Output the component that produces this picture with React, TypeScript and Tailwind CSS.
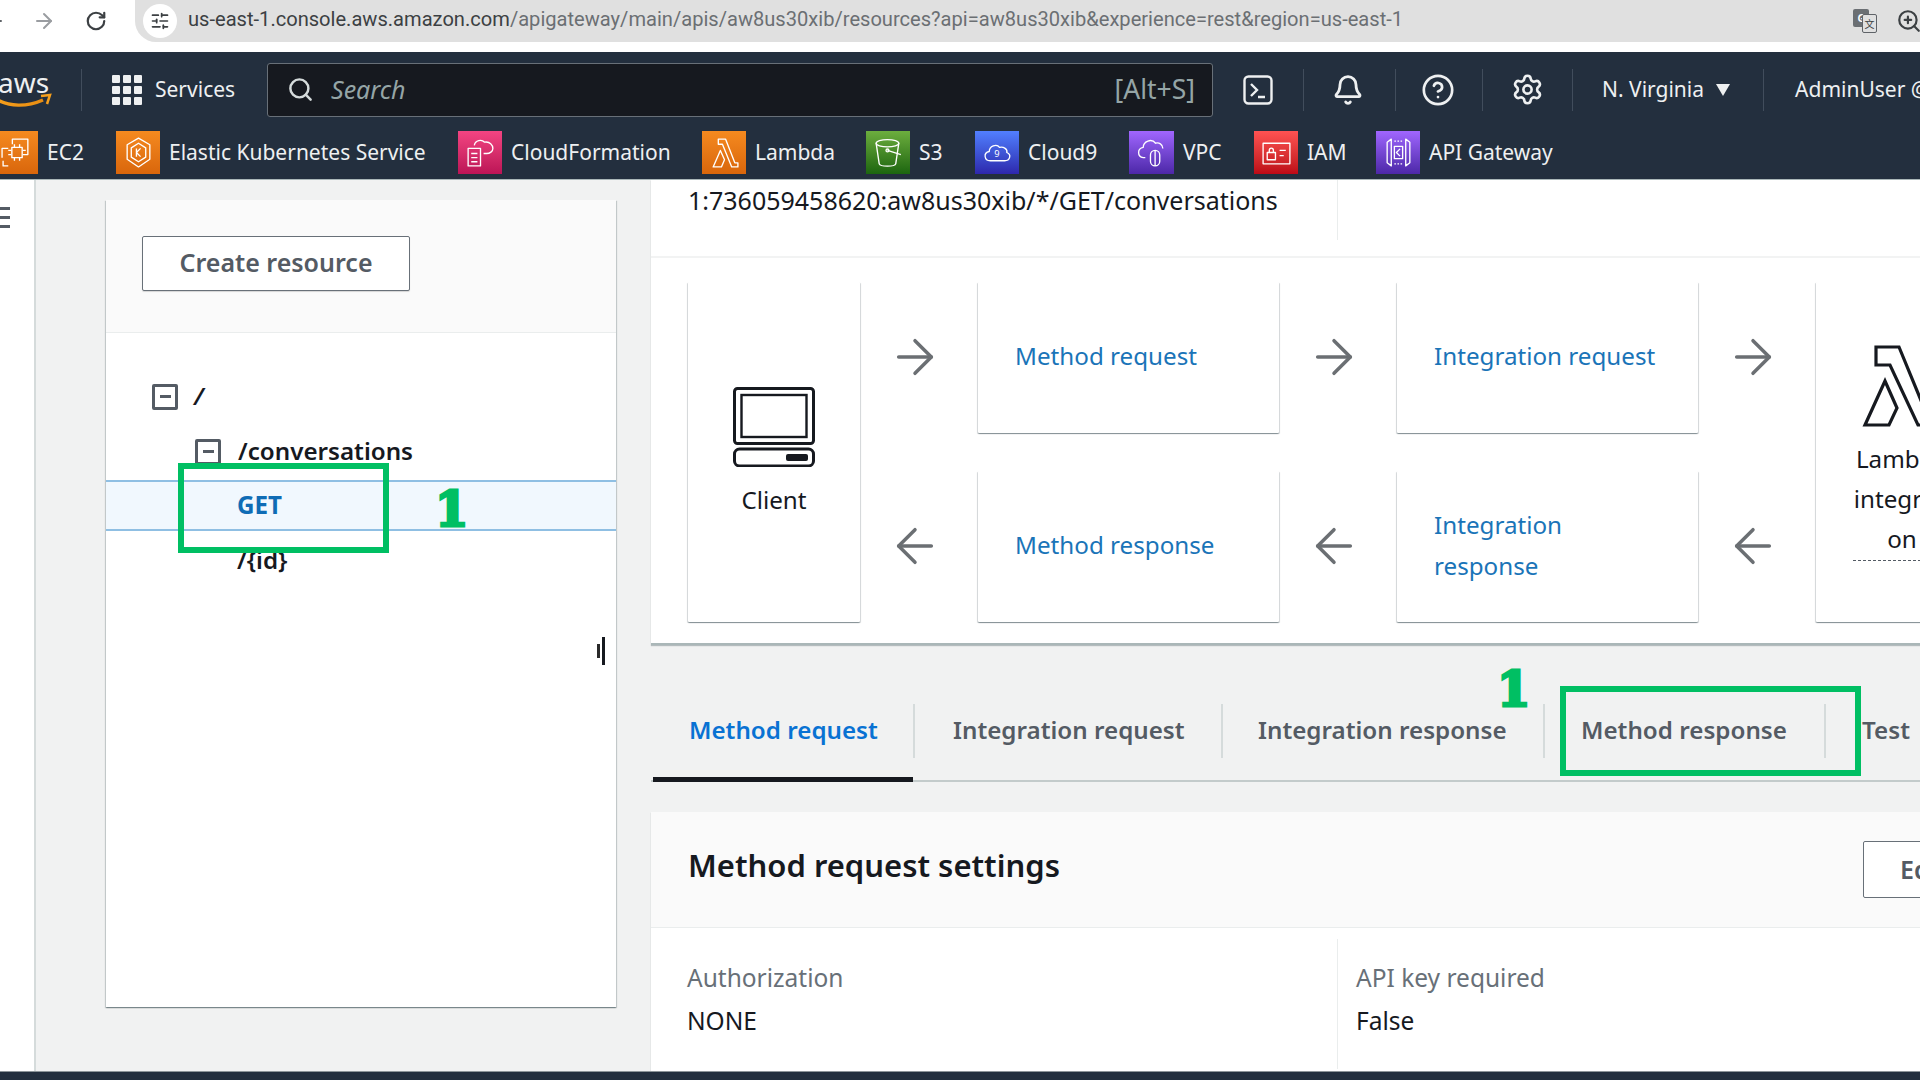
import { useId } from "react";
import { ArrowLeft, ArrowRight, Bell, CircleHelp, RotateCw, Search, Settings, SlidersHorizontal, ZoomIn } from "lucide-react";

const font = "font-['Noto_Sans',sans-serif]";

function Arrow({ dir }: { dir: "right" | "left" }) {
  const Icon = dir === "right" ? ArrowRight : ArrowLeft;
  return <Icon className="h-[56px] w-[56px] shrink-0 text-[#6b6f73]" strokeWidth={1.5} />;
}

function Card({ children, className }: { children: React.ReactNode; className?: string }) {
  return (
    <div className={`flex flex-col rounded-[1px] bg-white shadow-[0_1px_1px_0_rgba(0,28,36,0.3),1px_1px_1px_0_rgba(0,28,36,0.15),-1px_1px_1px_0_rgba(0,28,36,0.15)] ${className ?? ""}`}>
      {children}
    </div>
  );
}

function LinkCard({ lines }: { lines: string[] }) {
  return (
    <Card className="h-[151px] w-[301px] justify-center pb-[4px] pl-[37px] text-[24.2px] leading-[41px] text-[#1a74b8]">
      {lines.map((l) => (
        <span key={l}>{l}</span>
      ))}
    </Card>
  );
}

function Tile({ from, to, w = "w-[44px]", className, children }: { from: string; to: string; w?: string; className?: string; children: React.ReactNode }) {
  return (
    <div className={`flex h-[43px] shrink-0 items-center justify-center ${w} ${from} ${to} bg-linear-to-t ${className ?? ""}`}>
      <svg viewBox="0 0 32 32" className="h-[33px] w-[33px]" fill="none" stroke="#fff" strokeWidth="1.3" strokeLinejoin="round">
        {children}
      </svg>
    </div>
  );
}

function ServiceLink({ icon, label, width }: { icon: React.ReactNode; label: string; width: string }) {
  return (
    <div className={`flex shrink-0 items-center gap-[9px] ${width}`}>
      {icon}
      <span className="text-[21px] whitespace-nowrap text-[#eef0f1]">{label}</span>
    </div>
  );
}

function TabItem({ label, className }: { label: string; className: string }) {
  return (
    <div className={`flex h-[52px] shrink-0 items-center text-[24.2px] font-semibold ${className}`}>{label}</div>
  );
}

function GreenOne({ className }: { className?: string }) {
  return (
    <span className={`absolute font-['DejaVu_Serif',serif] text-[48px] leading-none font-bold text-[#00bf63] [-webkit-text-stroke:3px_#00bf63] ${className ?? ""}`}>1</span>
  );
}

function AwsLogo() {
  const id = useId();
  return (
    <svg viewBox="0 0 52 44" className="h-[44px] w-[52px] shrink-0 overflow-hidden" aria-hidden="true">
      <defs>
        <linearGradient id={id} x1="0" x2="1">
          <stop offset="0" stopColor="#f7a01c" />
          <stop offset="1" stopColor="#e88d12" />
        </linearGradient>
      </defs>
      <text x="-2" y="25" fill="#eef0f1" fontSize="28" fontFamily="Noto Sans, sans-serif">aws</text>
      <path d="M-4 31c13 8 31 8 47 1" fill="none" stroke={`url(#${id})`} strokeWidth="3.4" />
      <path d="M41 28l9-1-3 9" fill="none" stroke="#f7a01c" strokeWidth="2.5" />
    </svg>
  );
}

function NavDivider({ className }: { className: string }) {
  return <div className={`h-[42px] w-px shrink-0 bg-[#414d5c] ${className}`} />;
}

export default function App() {
  return (
    <div className={`${font} flex h-[1080px] w-[1920px] flex-col overflow-hidden bg-[#f1f2f2] text-[#16191f]`}>
      {/* browser chrome */}
      <div className="flex h-[52px] shrink-0 bg-white">
        <div className="flex h-[42px] w-full items-center">
          <ArrowLeft className="ml-[-18px] h-[24px] w-[24px] shrink-0 text-[#5f6368]" />
          <ArrowRight className="ml-[26px] h-[24px] w-[24px] shrink-0 text-[#9a9da1]" />
          <RotateCw className="ml-[29px] h-[22px] w-[22px] shrink-0 text-[#3c4043]" strokeWidth={2.4} />
          <div className="ml-[28px] flex h-[42px] flex-1 items-center rounded-bl-[21px] bg-[#e0e0e0]">
            <div className="ml-[8px] flex h-[34px] w-[34px] shrink-0 items-center justify-center rounded-full bg-white">
              <SlidersHorizontal className="h-[20px] w-[20px] text-[#3c4043]" />
            </div>
            <span className="ml-[11px] pb-[4px] font-['Roboto',sans-serif] text-[20.1px] whitespace-nowrap text-[#3c4043]">
              us-east-1.console.aws.amazon.com<span className="text-[#6b6f73]">/apigateway/main/apis/aw8us30xib/resources?api=aw8us30xib&amp;experience=rest&amp;region=us-east-1</span>
            </span>
            <div className="ml-auto flex items-center gap-[19px]">
              <div className="relative h-[24px] w-[24px]">
                <div className="absolute top-0 left-0 flex h-[18px] w-[16px] items-center justify-center rounded-[2px] bg-[#6b6f73] text-[10px] font-bold text-white">G</div>
                <div className="absolute top-[5px] left-[9px] flex h-[19px] w-[15px] items-center justify-center rounded-[2px] border border-[#5f6368] bg-[#e0e0e0] font-['Noto_Sans_CJK_SC',sans-serif] text-[10px] text-[#3c4043]">文</div>
              </div>
              <ZoomIn className="mr-[-2px] h-[26px] w-[26px] text-[#3c4043]" />
            </div>
          </div>
        </div>
      </div>

      {/* aws top nav */}
      <div className="h-[128px] shrink-0 border-b border-[#aab7b8] bg-[#232f3e] text-[#eef0f1]">
        <div className="flex h-[64px] items-center pt-[11px]">
          <div className="flex w-[81px] shrink-0 items-center">
            <AwsLogo />
          </div>
          <NavDivider className="" />
          <svg viewBox="0 0 30 30" className="ml-[30px] h-[30px] w-[30px] shrink-0 fill-[#eef0f1]">
            {[0, 11, 22].map((y) =>
              [0, 11, 22].map((x) => <rect key={`${x}-${y}`} x={x} y={y} width="8" height="8" rx="1" />),
            )}
          </svg>
          <span className="ml-[13px] w-[112px] shrink-0 text-[21px]">Services</span>
          <div className="flex h-[54px] w-[946px] shrink-0 items-center rounded-[3px] border border-[#687078] bg-[#16191f] pr-[17px] pl-[19px]">
            <Search className="h-[27px] w-[27px] text-[#d5dbdb]" strokeWidth={2.2} />
            <span className="ml-[17px] text-[25px] text-[#95a5a6] italic">Search</span>
            <span className="ml-auto text-[26.5px] text-[#95a5a6]">[Alt+S]</span>
          </div>
          <svg viewBox="0 0 30 30" className="ml-[30px] h-[30px] w-[30px] shrink-0" fill="none" stroke="#eef0f1" strokeWidth="2.4">
            <rect x="1.5" y="1.5" width="27" height="27" rx="4" />
            <path d="M8 9l6 6-6 6M15 22h7" />
          </svg>
          <NavDivider className="ml-[30px]" />
          <Bell className="ml-[28px] h-[32px] w-[32px] shrink-0" strokeWidth={2.1} />
          <NavDivider className="ml-[31px]" />
          <CircleHelp className="ml-[25px] h-[34px] w-[34px] shrink-0" strokeWidth={1.9} />
          <NavDivider className="ml-[27px]" />
          <Settings className="ml-[28px] h-[33px] w-[33px] shrink-0" strokeWidth={1.9} />
          <NavDivider className="ml-[28px]" />
          <span className="ml-[29px] shrink-0 text-[21px] whitespace-nowrap">N. Virginia</span>
          <svg viewBox="0 0 14 12" className="ml-[12px] h-[12px] w-[14px] shrink-0 fill-[#eef0f1]">
            <path d="M0 0h14L7 12z" />
          </svg>
          <NavDivider className="ml-[33px]" />
          <span className="ml-[31px] shrink-0 text-[21px] whitespace-nowrap">AdminUser @ 7360-5945-8620</span>
        </div>
        <div className="flex h-[63px] items-center pt-[10px]">
          <ServiceLink
            width="w-[116px]"
            label="EC2"
            icon={
              <Tile from="from-[#d9660b]" to="to-[#f58a1f]" className="ml-[-6px]">
                <rect x="11.5" y="11" width="10" height="10" />
                <path d="M2 21v-9h6M8 29H3v-5M12 8V3h15v15h-4M14 11V8M19 11V8M14 24v-3M19 24v-3M8 14h3M8 18h3M22 14h3M22 18h3" />
              </Tile>
            }
          />
          <ServiceLink
            width="w-[342px]"
            label="Elastic Kubernetes Service"
            icon={
              <Tile from="from-[#d9660b]" to="to-[#f58a1f]">
                <path d="M16 2l11 6.5v14L16 30 5 22.5v-14z" />
                <path d="M16 7l7 4.5v9L16 25l-7-4.5v-9z" />
                <path d="M14 12v8M14 16l4-4M14 16l4 4" />
              </Tile>
            }
          />
          <ServiceLink
            width="w-[244px]"
            label="CloudFormation"
            icon={
              <Tile from="from-[#bc1356]" to="to-[#f34482]">
                <rect x="4" y="12" width="12" height="17" />
                <path d="M7 17h6M7 21h6M7 25h6" />
                <path d="M10 9c1-5 7-6 10-3 5-1 8 3 8 6 0 3-3 5-6 5h-3" />
              </Tile>
            }
          />
          <ServiceLink
            width="w-[164px]"
            label="Lambda"
            icon={
              <Tile from="from-[#d9660b]" to="to-[#f58a1f]">
                <path d="M10 3h7l9 23h3v4h-6L14 8h-4z" />
                <path d="M12 14l4 9-3 7H5z" />
              </Tile>
            }
          />
          <ServiceLink
            width="w-[109px]"
            label="S3"
            icon={
              <Tile from="from-[#1b660f]" to="to-[#6cae3e]">
                <ellipse cx="15" cy="7" rx="11" ry="3.5" />
                <path d="M4 7l3 20c1 3 15 3 16 0l3-20" />
                <path d="M15 14l13 4" />
                <circle cx="15" cy="14" r="1.4" />
              </Tile>
            }
          />
          <ServiceLink
            width="w-[154px]"
            label="Cloud9"
            icon={
              <Tile from="from-[#2e27ad]" to="to-[#527fff]">
                <path d="M9 24c-6 0-7-8-1-9 0-5 7-8 10-4 4-1 8 2 7 5 5 2 3 8-2 8z" />
                <text x="15.5" y="20" fill="#fff" stroke="none" fontSize="9" textAnchor="middle">9</text>
              </Tile>
            }
          />
          <ServiceLink
            width="w-[125px]"
            label="VPC"
            icon={
              <Tile from="from-[#4d27a8]" to="to-[#a166ff]" w="w-[45px]">
                <path d="M10 21H8c-6-1-6-9 0-10 0-6 8-9 12-4 3-1 7 1 7 5" />
                <rect x="15" y="14" width="9" height="15" rx="4.5" />
                <path d="M19.5 14v15" />
              </Tile>
            }
          />
          <ServiceLink
            width="w-[122px]"
            label="IAM"
            icon={
              <Tile from="from-[#bd0816]" to="to-[#ff5252]">
                <rect x="3" y="7" width="26" height="20" />
                <rect x="7" y="16" width="8" height="7" />
                <path d="M9 16v-2c0-3 4-3 4 0v2M19 14h6M19 19h4" />
              </Tile>
            }
          />
          <ServiceLink
            width="w-[200px]"
            label="API Gateway"
            icon={
              <Tile from="from-[#4d27a8]" to="to-[#a166ff]">
                <path d="M5 6l4-3v26l-4-3zM27 6l-4-3v26l4-3z" />
                <path d="M12 5h8M12 27h8" strokeDasharray="1.5 1.5" />
                <rect x="12" y="10" width="8" height="12" />
                <path d="M17.5 12.5L14 16l3.5 3.5" />
              </Tile>
            }
          />
        </div>
      </div>

      <div className="flex min-h-0 flex-1">
        {/* side rail */}
        <div className="flex w-[36px] shrink-0 flex-col border-r-2 border-[#d5dbdb] bg-white pt-[27px]">
          <div className="flex w-[10px] flex-col gap-[6px]">
            <div className="h-[3px] bg-[#545b64]" />
            <div className="h-[3px] bg-[#545b64]" />
            <div className="h-[3px] bg-[#545b64]" />
          </div>
        </div>

        {/* resources panel */}
        <div className="relative mt-[20px] ml-[70px] flex h-[807px] w-[510px] shrink-0 flex-col bg-white shadow-[0_1px_1px_0_rgba(0,28,36,0.3),1px_1px_1px_0_rgba(0,28,36,0.15),-1px_1px_1px_0_rgba(0,28,36,0.15)]">
          <div className="h-[133px] shrink-0 border-b border-[#eaeded] bg-[#fafafa] pt-[36px] pl-[36px]">
            <div className="flex h-[55px] w-[268px] items-center justify-center rounded-[2px] border border-[#687078] bg-white pb-[2px] text-[25px] font-semibold text-[#545b64] shadow-[0_1px_1px_rgba(0,0,0,0.15)]">
              Create resource
            </div>
          </div>
          <div className="pt-[50px] text-[24.2px] font-semibold">
            <div className="flex h-[27px] items-center pl-[46px]">
              <TreeBox />
              <span className="ml-[16px] italic">/</span>
            </div>
            <div className="mt-[28px] flex h-[27px] items-center pl-[89px]">
              <TreeBox />
              <span className="ml-[17px]">/conversations</span>
            </div>
            <div className="mt-[15px] flex h-[51px] items-center border-y-2 border-[#8fbfe3] bg-[#f1f8fe] pl-[131px] font-bold text-[#0f6cb5]">
              GET
            </div>
            <div className="flex h-[59px] items-center pl-[131px]">{"/{id}"}</div>
          </div>
          <div className="absolute top-[437px] left-[491px] flex items-center gap-[2px]">
            <div className="h-[14px] w-[3px] bg-[#2a2a2a]" />
            <div className="h-[28px] w-[3px] bg-[#16191f]" />
          </div>
          <div className="absolute top-[263px] left-[72px] h-[90px] w-[211px] border-[6px] border-[#00bf63]" />
          <GreenOne className="top-[285px] left-[329px]" />
        </div>

        {/* method detail */}
        <div className="ml-[35px] flex w-[1400px] shrink-0 flex-col">
          <div className="h-[465px] shrink-0 border-b-2 border-[#aab7b8] bg-white shadow-[0_1px_1px_rgba(0,28,36,0.25)]">
            <div className="flex h-[78px] border-b-2 border-[#f2f3f3]">
              <div className="flex w-[686px] pt-[3px] pl-[37px] text-[25px] leading-[34px] whitespace-nowrap">
                1:736059458620:aw8us30xib/*/GET/conversations
              </div>
              <div className="h-[60px] w-px bg-[#eaeded]" />
            </div>
            <div className="flex pt-[24px] pl-[37px] text-[24.2px]">
              <Card className="h-[340px] w-[172px] shrink-0 items-center pt-[105px]">
                <ClientIcon />
                <span className="mt-[16px] leading-[34px]">Client</span>
              </Card>
              <Column>
                <Arrow dir="right" />
                <Arrow dir="left" />
              </Column>
              <div className="flex shrink-0 flex-col gap-[38px]">
                <LinkCard lines={["Method request"]} />
                <LinkCard lines={["Method response"]} />
              </div>
              <Column>
                <Arrow dir="right" />
                <Arrow dir="left" />
              </Column>
              <div className="flex shrink-0 flex-col gap-[38px]">
                <LinkCard lines={["Integration request"]} />
                <LinkCard lines={["Integration", "response"]} />
              </div>
              <Column>
                <Arrow dir="right" />
                <Arrow dir="left" />
              </Column>
              <Card className="h-[340px] w-[172px] shrink-0 items-center pt-[63px] text-center leading-[40px]">
                <LambdaIcon />
                <span className="mt-[12px] w-[98px] border-b border-dashed border-[#545b64] pb-[1px] whitespace-nowrap">
                  Lambda
                  <br />
                  integrati
                  <br />
                  on
                </span>
              </Card>
            </div>
          </div>

          {/* tabs */}
          <div className="relative mt-[59px] flex h-[78px] shrink-0 items-start border-b-2 border-[#c3cbcb]">
            <div className="ml-[2px] h-[78px] w-[260px] shrink-0 border-b-[5px] border-[#16191f] pl-[36px]">
              <TabItem label="Method request" className="text-[#0972d3]" />
            </div>
            <TabItem label="Integration request" className="h-[54px] w-[308px] border-l-2 border-[#d5dbdb] pb-[2px] pl-[38px] text-[#545b64]" />
            <TabItem label="Integration response" className="h-[54px] w-[322px] border-l-2 border-[#d5dbdb] pb-[2px] pl-[35px] text-[#545b64]" />
            <TabItem label="Method response" className="h-[54px] w-[281px] border-l-2 border-[#d5dbdb] pb-[2px] pl-[36px] text-[#545b64]" />
            <TabItem label="Test" className="h-[54px] border-l-2 border-[#d5dbdb] pb-[2px] pl-[36px] text-[#545b64]" />
            <div className="absolute top-[-18px] left-[909px] h-[90px] w-[301px] border-[6px] border-[#00bf63]" />
            <GreenOne className="top-[-39px] left-[846px]" />
          </div>

          {/* settings */}
          <div className="mt-[30px] flex-1 bg-white shadow-[0_1px_1px_rgba(0,28,36,0.25)]">
            <div className="flex h-[116px] items-center justify-between border-b border-[#eaeded] bg-[#fafafa] pl-[37px]">
              <h2 className="pb-[8px] text-[31px] font-semibold">Method request settings</h2>
              <div className="mr-[20px] flex h-[57px] w-[168px] items-center rounded-[2px] border border-[#687078] bg-white pl-[36px] text-[25px] font-semibold text-[#545b64]">
                Edit
              </div>
            </div>
            <div className="flex pt-[11px]">
              <div className="w-[686px] pt-[17px] pl-[36px]">
                <Field label="Authorization" value="NONE" />
              </div>
              <div className="min-h-[130px] border-l border-[#eaeded] pt-[17px] pl-[18px]">
                <Field label="API key required" value="False" />
              </div>
            </div>
          </div>
        </div>
      </div>

      <div className="h-[9px] shrink-0 border-t border-[#8d9599] bg-[#232f3e]" />
    </div>
  );
}

function Column({ children }: { children: React.ReactNode }) {
  return <div className="flex h-[340px] w-[118px] shrink-0 flex-col items-center gap-[133px] pt-[47px] pr-[9px]">{children}</div>;
}

function Field({ label, value }: { label: string; value: string }) {
  return (
    <div className="text-[24.5px] leading-[43px]">
      <div className="text-[#687078]">{label}</div>
      <div>{value}</div>
    </div>
  );
}

function TreeBox() {
  return (
    <div className="flex h-[26px] w-[26px] shrink-0 items-center justify-center rounded-[2px] border-[3px] border-[#545b64]">
      <div className="h-[3px] w-[11px] bg-[#545b64]" />
    </div>
  );
}

function ClientIcon() {
  return (
    <svg viewBox="0 0 82 80" className="h-[80px] w-[82px] shrink-0" fill="none" stroke="#16191f" strokeWidth="2.4">
      <rect x="1.5" y="1.5" width="79" height="55" rx="3" strokeWidth="3" />
      <rect x="8.5" y="8" width="65" height="42" strokeWidth="2.4" />
      <rect x="1.5" y="62" width="79" height="17" rx="5" strokeWidth="3" />
      <rect x="53" y="67" width="22" height="7" rx="2" fill="#16191f" stroke="none" />
    </svg>
  );
}

function LambdaIcon() {
  return (
    <svg viewBox="0 0 80 82" className="h-[82px] w-[80px] shrink-0" fill="none" stroke="#16191f" strokeWidth="3.2" strokeLinejoin="miter">
      <path d="M14 2h23l28 68h13v10H56L28 20H14z" />
      <path d="M23 36l12 27-8 17H3z" />
    </svg>
  );
}
